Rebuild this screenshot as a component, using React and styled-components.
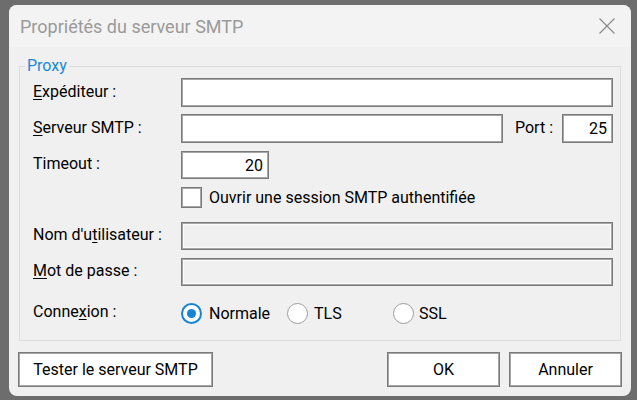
import React from 'react';
import styled, { createGlobalStyle } from 'styled-components';

const GlobalStyle = createGlobalStyle`
  html, body {
    margin: 0;
    padding: 0;
    background: #6d6d6d;
  }
  body {
    font-family: Roboto, "Liberation Sans", sans-serif;
    color: #000;
  }
`;

const Page = styled.div`
  width: 637px;
  height: 400px;
  padding: 5px 0 0 9px;
  box-sizing: border-box;
  overflow: hidden;
`;

const Dialog = styled.div`
  width: 622px;
  height: 391px;
  background: #f0f0f0;
  border-radius: 8px;
  overflow: hidden;
  display: flex;
  flex-direction: column;
`;

const TitleBar = styled.div`
  flex: 0 0 42px;
  background: #f3f3f3;
  display: flex;
  align-items: center;
  padding: 0 16px 0 11px;
  box-sizing: border-box;
`;

const Title = styled.div`
  flex: 1;
  font-size: 18px;
  color: #9a9a9a;
`;

const CloseButton = styled.div`
  width: 16px;
  height: 16px;
  display: flex;
`;

const Body = styled.div`
  padding: 9px 10px 0 10px;
`;

const Group = styled.fieldset`
  margin: 0;
  padding: 0;
  border: 1px solid #dcdcdc;
  min-width: 0;
`;

const Legend = styled.legend`
  margin-left: 5px;
  padding: 0 2px;
  font-size: 16px;
  line-height: 20px;
  color: #1a8ad8;
`;

const Fields = styled.div`
  display: flex;
  flex-direction: column;
  padding: 2px 7px 16px 13px;
`;

const Row = styled.div`
  display: flex;
  align-items: center;
  height: ${p => p.$h}px;
  margin-top: ${p => p.$mt || 0}px;
`;

const Label = styled.div`
  flex: 0 0 ${p => p.$w || 148}px;
  margin-left: ${p => p.$ml || 0}px;
  font-size: 16px;
  padding-bottom: 3px;
  white-space: nowrap;
`;

const TextBox = styled.input`
  box-sizing: border-box;
  flex: ${p => (p.$w ? `0 0 ${p.$w}px` : '1')};
  min-width: 0;
  height: 100%;
  margin: 0;
  padding: 0 5px;
  border: 1px solid #7a7a7a;
  box-shadow: ${p =>
    p.disabled ? 'inset 0 0 0 1px #a6a6a6, inset 0 0 0 2px #fbfbfb' : 'inset 0 0 0 1px #a6a6a6'};
  background: ${p => (p.disabled ? '#f0f0f0' : '#fff')};
  text-align: ${p => p.$align || 'left'};
  font-family: inherit;
  font-size: 16px;
  color: #000;
  outline: none;
`;

const CheckLabel = styled.label`
  display: flex;
  align-items: center;
  gap: 7px;
  font-size: 16px;
`;

const CheckBox = styled.span`
  width: 21px;
  height: 21px;
  box-sizing: border-box;
  border: 1px solid #7a7a7a;
  box-shadow: inset 0 0 0 1px #a6a6a6;
  background: #fff;
`;

const RadioOption = styled.label`
  flex: 0 0 106px;
  display: flex;
  align-items: center;
  gap: ${p => p.$gap || 7}px;
  font-size: 16px;
`;

const RadioDot = styled.span`
  width: 21px;
  height: 21px;
  border-radius: 50%;
  box-sizing: border-box;
  border: ${p => (p.$checked ? '2px solid #1583d7' : '1.5px solid #9c9c9c')};
  background: #fff;
  display: flex;
  align-items: center;
  justify-content: center;

  &::after {
    content: '';
    width: 9px;
    height: 9px;
    border-radius: 50%;
    background: ${p => (p.$checked ? '#1583d7' : 'transparent')};
  }
`;

const Footer = styled.div`
  display: flex;
  gap: 9px;
  padding: 11px 9px 0 9px;
`;

const Button = styled.button`
  flex: 0 0 ${p => p.$w}px;
  height: 35px;
  margin: 0;
  margin-right: ${p => (p.$push ? 'auto' : '0')};
  padding: 0;
  border: 1px solid #7a7a7a;
  box-shadow: inset 0 0 0 1px #a6a6a6;
  background: #fff;
  font-family: inherit;
  font-size: 16px;
  color: #000;
`;

const Key = styled.u`
  text-decoration-thickness: 1px;
  text-underline-offset: 2px;
`;

export default function App() {
  return (
    <Page>
      <GlobalStyle />
      <Dialog>
        <TitleBar>
          <Title>Propriétés du serveur SMTP</Title>
          <CloseButton>
            <svg width="16" height="16" viewBox="0 0 16 16">
              <path d="M0.5 0.5 L15.5 15.5 M15.5 0.5 L0.5 15.5" stroke="#8a8a8a" strokeWidth="1.2" fill="none" />
            </svg>
          </CloseButton>
        </TitleBar>

        <Body>
          <Group>
            <Legend>Proxy</Legend>
            <Fields>
              <Row $h={29}>
                <Label><Key>E</Key>xpéditeur :</Label>
                <TextBox readOnly defaultValue="" />
              </Row>
              <Row $h={29} $mt={7}>
                <Label><Key>S</Key>erveur SMTP :</Label>
                <TextBox readOnly $w={322} defaultValue="" />
                <Label $w={47} $ml={12}>Port :</Label>
                <TextBox readOnly $w={51} $align="right" defaultValue="25" />
              </Row>
              <Row $h={28} $mt={8}>
                <Label>Timeout :</Label>
                <TextBox readOnly $w={88} $align="right" defaultValue="20" />
              </Row>
              <Row $h={21} $mt={8}>
                <Label />
                <CheckLabel>
                  <CheckBox />
                  Ouvrir une session SMTP authentifiée
                </CheckLabel>
              </Row>
              <Row $h={28} $mt={14}>
                <Label>Nom d'u<Key>t</Key>ilisateur :</Label>
                <TextBox disabled defaultValue="" />
              </Row>
              <Row $h={28} $mt={8}>
                <Label><Key>M</Key>ot de passe :</Label>
                <TextBox disabled type="password" defaultValue="" />
              </Row>
              <Row $h={22} $mt={16}>
                <Label>Conne<Key>x</Key>ion :</Label>
                <RadioOption>
                  <RadioDot $checked />
                  Normale
                </RadioOption>
                <RadioOption $gap={6}>
                  <RadioDot />
                  TLS
                </RadioOption>
                <RadioOption $gap={5}>
                  <RadioDot />
                  SSL
                </RadioOption>
              </Row>
            </Fields>
          </Group>
        </Body>

        <Footer>
          <Button $w={195} $push>Tester le serveur SMTP</Button>
          <Button $w={113}>OK</Button>
          <Button $w={113}>Annuler</Button>
        </Footer>
      </Dialog>
    </Page>
  );
}
